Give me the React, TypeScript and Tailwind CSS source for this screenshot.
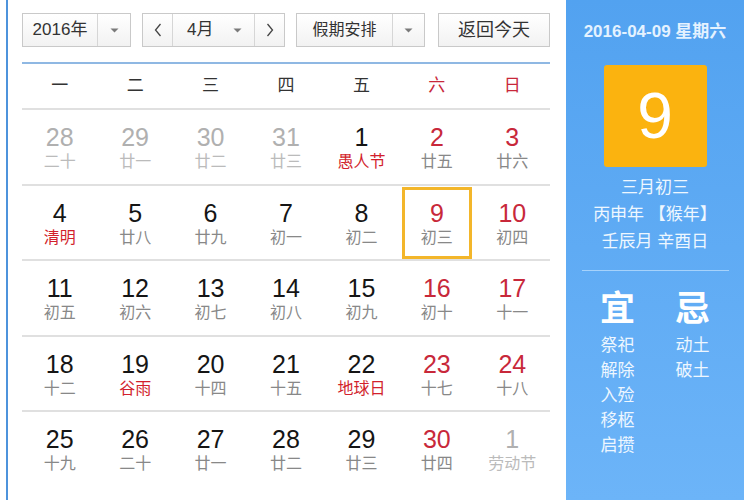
type Day = { n: number; l: string; dim?: boolean; red?: boolean; hol?: boolean; sel?: boolean }

const rows: Day[][] = [
  [
    { n: 28, l: '二十', dim: true },
    { n: 29, l: '廿一', dim: true },
    { n: 30, l: '廿二', dim: true },
    { n: 31, l: '廿三', dim: true },
    { n: 1, l: '愚人节', hol: true },
    { n: 2, l: '廿五', red: true },
    { n: 3, l: '廿六', red: true },
  ],
  [
    { n: 4, l: '清明', hol: true },
    { n: 5, l: '廿八' },
    { n: 6, l: '廿九' },
    { n: 7, l: '初一' },
    { n: 8, l: '初二' },
    { n: 9, l: '初三', red: true, sel: true },
    { n: 10, l: '初四', red: true },
  ],
  [
    { n: 11, l: '初五' },
    { n: 12, l: '初六' },
    { n: 13, l: '初七' },
    { n: 14, l: '初八' },
    { n: 15, l: '初九' },
    { n: 16, l: '初十', red: true },
    { n: 17, l: '十一', red: true },
  ],
  [
    { n: 18, l: '十二' },
    { n: 19, l: '谷雨', hol: true },
    { n: 20, l: '十四' },
    { n: 21, l: '十五' },
    { n: 22, l: '地球日', hol: true },
    { n: 23, l: '十七', red: true },
    { n: 24, l: '十八', red: true },
  ],
  [
    { n: 25, l: '十九' },
    { n: 26, l: '二十' },
    { n: 27, l: '廿一' },
    { n: 28, l: '廿二' },
    { n: 29, l: '廿三' },
    { n: 30, l: '廿四', red: true },
    { n: 1, l: '劳动节', dim: true },
  ],
]

const weekdays = ['一', '二', '三', '四', '五', '六', '日']

function Caret() {
  return (
    <svg width="9" height="5" viewBox="0 0 9 5">
      <path d="M0.5 0.5h8L4.5 4.5z" fill="#7a7a7a" />
    </svg>
  )
}

function Chevron({ dir }: { dir: 'l' | 'r' }) {
  return (
    <svg width="8" height="14" viewBox="0 0 8 14">
      <path
        d={dir === 'l' ? 'M6.5 1L1.5 7l5 6' : 'M1.5 1l5 6-5 6'}
        fill="none"
        stroke="#444"
        strokeWidth="1.3"
      />
    </svg>
  )
}

const box = 'h-[34px] border border-[#c9c9c9] bg-gradient-to-b from-white to-[#f2f2f2] flex items-stretch'

function Cell({ d }: { d: Day }) {
  const num = d.dim ? 'text-[#b0b0b0]' : d.red ? 'text-[#c8283a]' : 'text-[#151515]'
  const lunar = d.hol && !d.dim ? 'text-[#d21f2d]' : d.dim ? 'text-[#bbbbbb]' : 'text-[#888888]'
  const inner = (
    <>
      <div className={`text-[25px] leading-[26px] ${num}`}>{d.n}</div>
      <div className={`mt-[2px] text-[16px] leading-[20px] ${lunar}`}>{d.l}</div>
    </>
  )
  if (d.sel) {
    return (
      <div className="flex h-[73.5px] flex-col items-stretch pt-[1px]">
        <div className="mx-[3px] flex h-[72.5px] flex-col items-center border-[3px] border-[#f3b62a] pt-[10px]">
          {inner}
        </div>
      </div>
    )
  }
  return <div className="flex h-[73.5px] flex-col items-center pt-[14px]">{inner}</div>
}

export default function App() {
  return (
    <div
      className="flex h-[500px] w-[750px] overflow-hidden bg-white pl-[6px]"
      style={{ fontFamily: '"Liberation Sans", "Noto Sans CJK SC", sans-serif' }}
    >
      <div className="w-[560px] border-l-2 border-[#4d93dc] pl-[14px] pr-[16px]">
        <div className="mt-[13px] flex text-[17px] text-[#333]">
          <div className={`${box} w-[109px]`}>
            <div className="flex w-[75px] items-center justify-center border-r border-[#d6d6d6]">2016年</div>
            <div className="flex flex-1 items-center justify-center">
              <Caret />
            </div>
          </div>
          <div className={`${box} ml-[11px] w-[143px]`}>
            <div className="flex w-[30px] items-center justify-center border-r border-[#d6d6d6]">
              <Chevron dir="l" />
            </div>
            <div className="flex flex-1 items-center justify-between pl-[14px] pr-[12px]">
              <span>4月</span>
              <Caret />
            </div>
            <div className="flex w-[30px] items-center justify-center border-l border-[#d6d6d6]">
              <Chevron dir="r" />
            </div>
          </div>
          <div className={`${box} ml-[11px] w-[129px]`}>
            <div className="flex w-[96px] items-center justify-center border-r border-[#d6d6d6] text-[16px]">假期安排</div>
            <div className="flex flex-1 items-center justify-center">
              <Caret />
            </div>
          </div>
          <div className={`${box} ml-[13px] flex-1`}>
            <div className="flex flex-1 items-center justify-center text-[18px]">返回今天</div>
          </div>
        </div>
        <div className="mt-[15px] border-t-2 border-[#8fb8e3]" />
        <div className="grid h-[44px] grid-cols-7 items-center text-[17px]">
          {weekdays.map((w, i) => (
            <div key={w} className={`text-center ${i > 4 ? 'text-[#c8283a]' : 'text-[#333]'}`}>
              {w}
            </div>
          ))}
        </div>
        {rows.map((r, i) => (
          <div key={i} className="grid grid-cols-7 border-t-2 border-[#e0e0e0]">
            {r.map((d, j) => (
              <Cell key={j} d={d} />
            ))}
          </div>
        ))}
      </div>
      <div className="flex w-[178px] flex-col items-center bg-gradient-to-b from-[#52a2f0] to-[#6cb4f8] text-[#eef7ff]">
        <div className="mt-[22px] text-[17px] font-bold leading-[20px] text-[#e4f2ff]">2016-04-09 星期六</div>
        <div className="mt-[23px] flex h-[102px] w-[103px] items-center justify-center rounded-[3px] bg-[#fbb30f] text-[64px] leading-none text-white">
          9
        </div>
        <div className="mt-[7px] flex flex-col items-center text-[17px] leading-[27px]">
          <div>三月初三</div>
          <div>丙申年 【猴年】</div>
          <div>壬辰月 辛酉日</div>
        </div>
        <div className="mt-[15px] w-[147px] border-t border-[#a6d2fb]" />
        <div className="mt-[18px] flex gap-[15px]">
          <div className="flex w-[60px] flex-col items-center">
            <div className="text-[35px] font-bold leading-[40px] text-white">宜</div>
            <div className="mt-[4px] flex flex-col items-center text-[17px] leading-[25px]">
              <div>祭祀</div>
              <div>解除</div>
              <div>入殓</div>
              <div>移柩</div>
              <div>启攒</div>
            </div>
          </div>
          <div className="flex w-[60px] flex-col items-center">
            <div className="text-[35px] font-bold leading-[40px] text-white">忌</div>
            <div className="mt-[4px] flex flex-col items-center text-[17px] leading-[25px]">
              <div>动土</div>
              <div>破土</div>
            </div>
          </div>
        </div>
      </div>
    </div>
  )
}
